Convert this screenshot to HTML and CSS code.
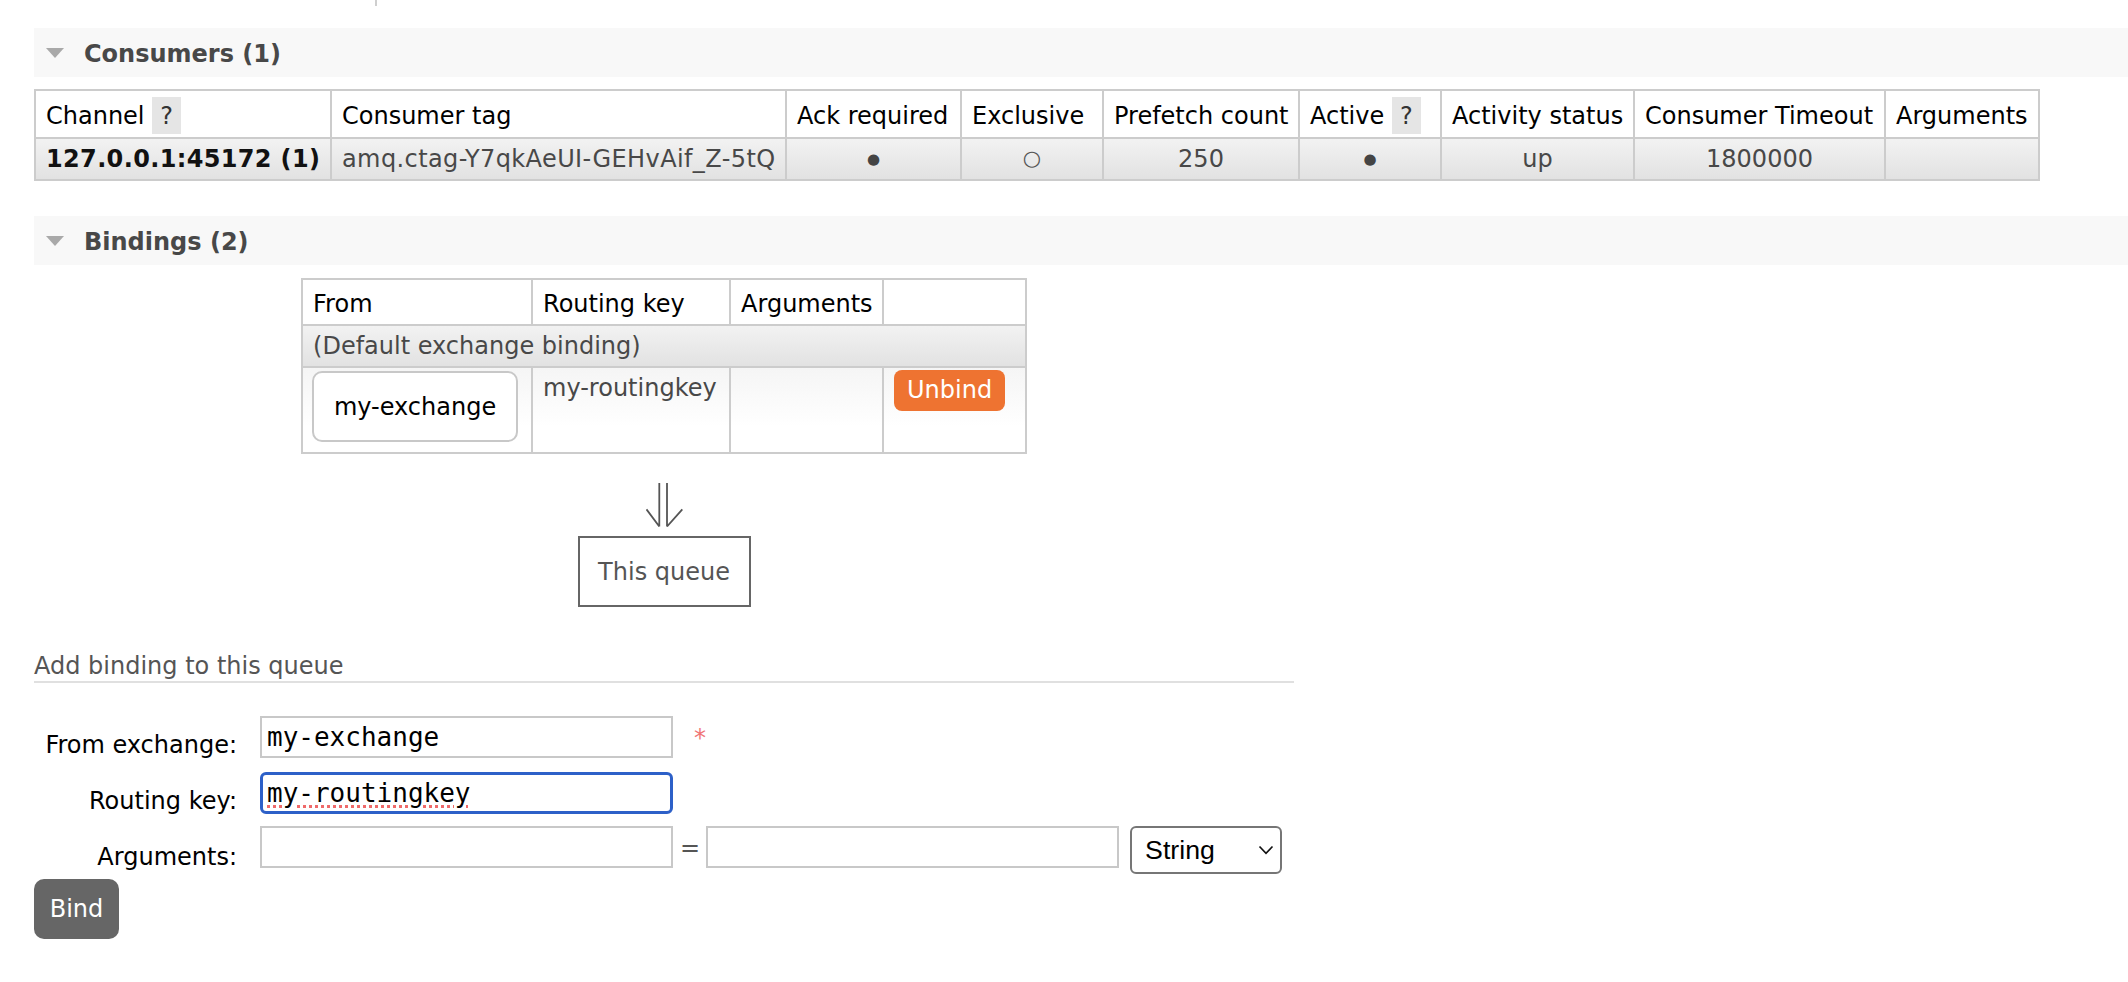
FILE: index.html
```html
<!DOCTYPE html>
<html lang="en">
<head>
<meta charset="utf-8">
<title>Queue</title>
<link rel="stylesheet" href="styles.css">
</head>
<body>
<div class="page">
  <div class="top-tick"></div>

  <div class="section section-consumers">
    <h2 class="section-title"><span class="arrow-down"></span>Consumers (1)</h2>
    <table class="list consumers">
      <colgroup>
        <col class="c-channel"><col class="c-tag"><col class="c-ack"><col class="c-excl"><col class="c-prefetch"><col class="c-active"><col class="c-status"><col class="c-timeout"><col class="c-args">
      </colgroup>
      <thead>
        <tr>
          <th>Channel <span class="help">?</span></th>
          <th>Consumer tag</th>
          <th>Ack required</th>
          <th>Exclusive</th>
          <th>Prefetch count</th>
          <th>Active <span class="help">?</span></th>
          <th>Activity status</th>
          <th>Consumer Timeout</th>
          <th>Arguments</th>
        </tr>
      </thead>
      <tbody>
        <tr class="alt1">
          <td class="strong">127.0.0.1:45172 (1)</td>
          <td class="ctag">amq.ctag-Y7qkAeUI-GEHvAif_Z-5tQ</td>
          <td class="c"><span class="dot">●</span></td>
          <td class="c"><span class="ring">○</span></td>
          <td class="c">250</td>
          <td class="c"><span class="dot">●</span></td>
          <td class="c">up</td>
          <td class="c">1800000</td>
          <td></td>
        </tr>
      </tbody>
    </table>
  </div>

  <div class="section section-bindings">
    <h2 class="section-title"><span class="arrow-down"></span>Bindings (2)</h2>
    <div class="bindings-wrapper">
      <table class="list bindings">
        <colgroup>
          <col class="b-from"><col class="b-key"><col class="b-args"><col class="b-act">
        </colgroup>
        <thead>
          <tr><th>From</th><th>Routing key</th><th>Arguments</th><th></th></tr>
        </thead>
        <tbody>
          <tr class="alt1"><td colspan="4">(Default exchange binding)</td></tr>
          <tr class="alt2">
            <td class="src-cell"><span class="exchange-box">my-exchange</span></td>
            <td>my-routingkey</td>
            <td></td>
            <td class="act-cell"><button class="unbind" type="button">Unbind</button></td>
          </tr>
        </tbody>
      </table>

      <div class="flow-arrow">
        <svg width="37" height="44" viewBox="0 0 37 44" aria-hidden="true">
          <path d="M13.3 0V43.5M21 0V43.5M0.5 26.3L13.3 43.5M36.3 26.3L21 43.5" stroke="#555" stroke-width="1.8" fill="none"/>
        </svg>
      </div>
      <div class="queue-box">This queue</div>

      <h3 class="form-heading">Add binding to this queue</h3>
      <form class="add-binding">
        <div class="form-row row-exchange">
          <label class="form-label">From exchange:</label>
          <div class="form-field">
            <input class="text-input" type="text" value="my-exchange">
            <span class="mand">*</span>
          </div>
        </div>
        <div class="form-row row-key">
          <label class="form-label">Routing key:</label>
          <div class="form-field">
            <input class="text-input focused" type="text" value="my-routingkey">
          </div>
        </div>
        <div class="form-row row-args">
          <label class="form-label">Arguments:</label>
          <div class="form-field">
            <input class="text-input" type="text" value="">
            <span class="equals">=</span>
            <input class="text-input" type="text" value="">
            <div class="select-wrap">
              <select class="type-select"><option>String</option><option>Number</option><option>Boolean</option></select>
              <svg class="chev" width="16" height="10" viewBox="0 0 16 10" aria-hidden="true">
                <path d="M1.5 1.5L8 8.3L14.5 1.5" stroke="#111" stroke-width="1.7" fill="none"/>
              </svg>
            </div>
          </div>
        </div>
        <button class="bind-btn" type="button">Bind</button>
      </form>
    </div>
  </div>
</div>
</body>
</html>
```

FILE: styles.css
```css
* { box-sizing: border-box; }

html, body {
  margin: 0;
  padding: 0;
  background: #fff;
}

body {
  font-family: "DejaVu Sans", Verdana, sans-serif;
  font-size: 24px;
  line-height: 28px;
  color: #484848;
}

.page {
  padding-left: 34px;
}

.top-tick {
  width: 2px;
  height: 6px;
  margin-left: 341px;
  background: #cfcfcf;
}

.section-consumers { margin-top: 22px; }
.section-bindings { margin-top: 35px; }

.section-title {
  display: flex;
  align-items: center;
  gap: 20px;
  margin: 0 0 12px;
  padding: 12px 0 9px 12px;
  background: #f8f8f8;
  font-size: 24px;
  font-weight: bold;
  line-height: 28px;
  color: #484848;
}

.arrow-down {
  width: 0;
  height: 0;
  margin-top: -3px;
  border-left: 9.5px solid transparent;
  border-right: 9.5px solid transparent;
  border-top: 10px solid #a9a9a9;
}

/* tables */
.list {
  border-collapse: collapse;
  table-layout: fixed;
  border: 2px solid #ccc;
}

.list th,
.list td {
  border: 2px solid #ccc;
  text-align: left;
  white-space: nowrap;
}

.list th {
  padding: 10px 10px 6px;
  font-weight: normal;
  color: #000;
  vertical-align: middle;
  background: #fff;
}

.list td {
  padding: 6px 10px;
  vertical-align: top;
}

.list tr.alt1 td { background: linear-gradient(#f2f2f2, #e2e2e2); }
.list tr.alt2 td { background: linear-gradient(#f5f5f5, #fff 70%); }

.list td.c { text-align: center; }
.list td.strong { font-weight: bold; color: #111; letter-spacing: 0.35px; }
.list td.ctag { letter-spacing: 0.4px; }

.help {
  display: inline-block;
  padding: 5px 8px 4px;
  margin: -4px 0 -3px 0;
  background: #e5e5e5;
  color: #333;
  letter-spacing: 0;
}

.dot {
  font-size: 15px;
  line-height: 1;
  vertical-align: 3px;
  color: #444;
}

.ring {
  font-size: 21px;
  line-height: 1;
  vertical-align: 2px;
  color: #555;
}

.consumers { width: 2004px; }
.c-channel { width: 296px; }
.c-tag { width: 455px; }
.c-ack { width: 175px; }
.c-excl { width: 142px; }
.c-prefetch { width: 196px; }
.c-active { width: 142px; }
.c-status { width: 193px; }
.c-timeout { width: 251px; }
.c-args { width: 154px; }

/* bindings */
.bindings-wrapper {
  display: inline-block;
  vertical-align: top;
}

.bindings {
  width: 724px;
  margin: 1px auto 0;
}
.b-from { width: 230px; }
.b-key { width: 198px; }
.b-args { width: 153px; }
.b-act { width: 143px; }

.list td.src-cell { padding: 3px 10px 10px 9px; }
.list td.act-cell { padding-top: 2px; }

.exchange-box {
  display: inline-block;
  width: 206px;
  padding: 20px 0 19px;
  border: 2px solid #c8c8c8;
  border-radius: 10px;
  background: #fff;
  color: #000;
  text-align: center;
}

.unbind {
  display: block;
  padding: 6px 13px;
  border: 0;
  border-radius: 8px;
  background: #ee7331;
  color: #fff;
  font-family: "DejaVu Sans", Verdana, sans-serif;
  font-size: 24px;
  line-height: 29px;
}

.flow-arrow {
  width: 37px;
  height: 44px;
  margin: 29px auto 0;
}
.flow-arrow svg { display: block; }

.queue-box {
  width: 173px;
  margin: 9px auto 0;
  padding: 20px 0 19px;
  border: 2px solid #666;
  text-align: center;
  color: #555;
}

/* add binding form */
.form-heading {
  margin: 45px 0 0;
  padding-bottom: 1px;
  border-bottom: 2px solid #e0e0e0;
  font-size: 24px;
  font-weight: normal;
  line-height: 28px;
  color: #555;
}

.add-binding {
  margin-top: 33px;
}

.form-row {
  display: flex;
  align-items: flex-start;
}
.row-key { margin-top: 14px; }
.row-args { margin-top: 12px; }

.form-label {
  flex: none;
  width: 226px;
  height: 42px;
  padding: 15px 23px 0 0;
  text-align: right;
  color: #000;
}
.row-args .form-label { padding-top: 17px; }

.form-field {
  display: flex;
  align-items: flex-start;
  padding-right: 12px;
}

.text-input {
  width: 413px;
  height: 42px;
  margin: 0;
  padding: 0 5px;
  border: 2px solid #c8c8c8;
  border-radius: 0;
  background: #fff;
  color: #000;
  font-family: "DejaVu Sans Mono", monospace;
  font-size: 26px;
  outline: none;
}

.text-input.focused {
  border: 3px solid #2d60c8;
  border-radius: 6px;
  padding: 0 4px;
  text-decoration: underline dotted #ef6a6a;
  text-decoration-thickness: 3px;
  text-underline-offset: 3px;
}

.mand {
  margin: 8px 0 0 21px;
  color: #f07575;
}

.equals {
  margin: 8px 6px 0 7px;
  color: #555;
}

.select-wrap {
  position: relative;
  margin-left: 11px;
}

.type-select {
  appearance: none;
  -webkit-appearance: none;
  display: block;
  width: 152px;
  height: 48px;
  margin: 0;
  padding: 0 0 0 13px;
  border: 2px solid #767676;
  border-radius: 6px;
  background: #fff;
  color: #000;
  font-family: "Liberation Sans", Arial, sans-serif;
  font-size: 26.7px;
}

.chev {
  position: absolute;
  right: 8px;
  top: 19px;
  pointer-events: none;
}

.bind-btn {
  display: block;
  margin-top: 5px;
  width: 85px;
  height: 60px;
  padding: 0;
  border: 0;
  border-radius: 10px;
  background: #666;
  color: #fff;
  font-family: "DejaVu Sans", Verdana, sans-serif;
  font-size: 24px;
  line-height: 28px;
}
```
